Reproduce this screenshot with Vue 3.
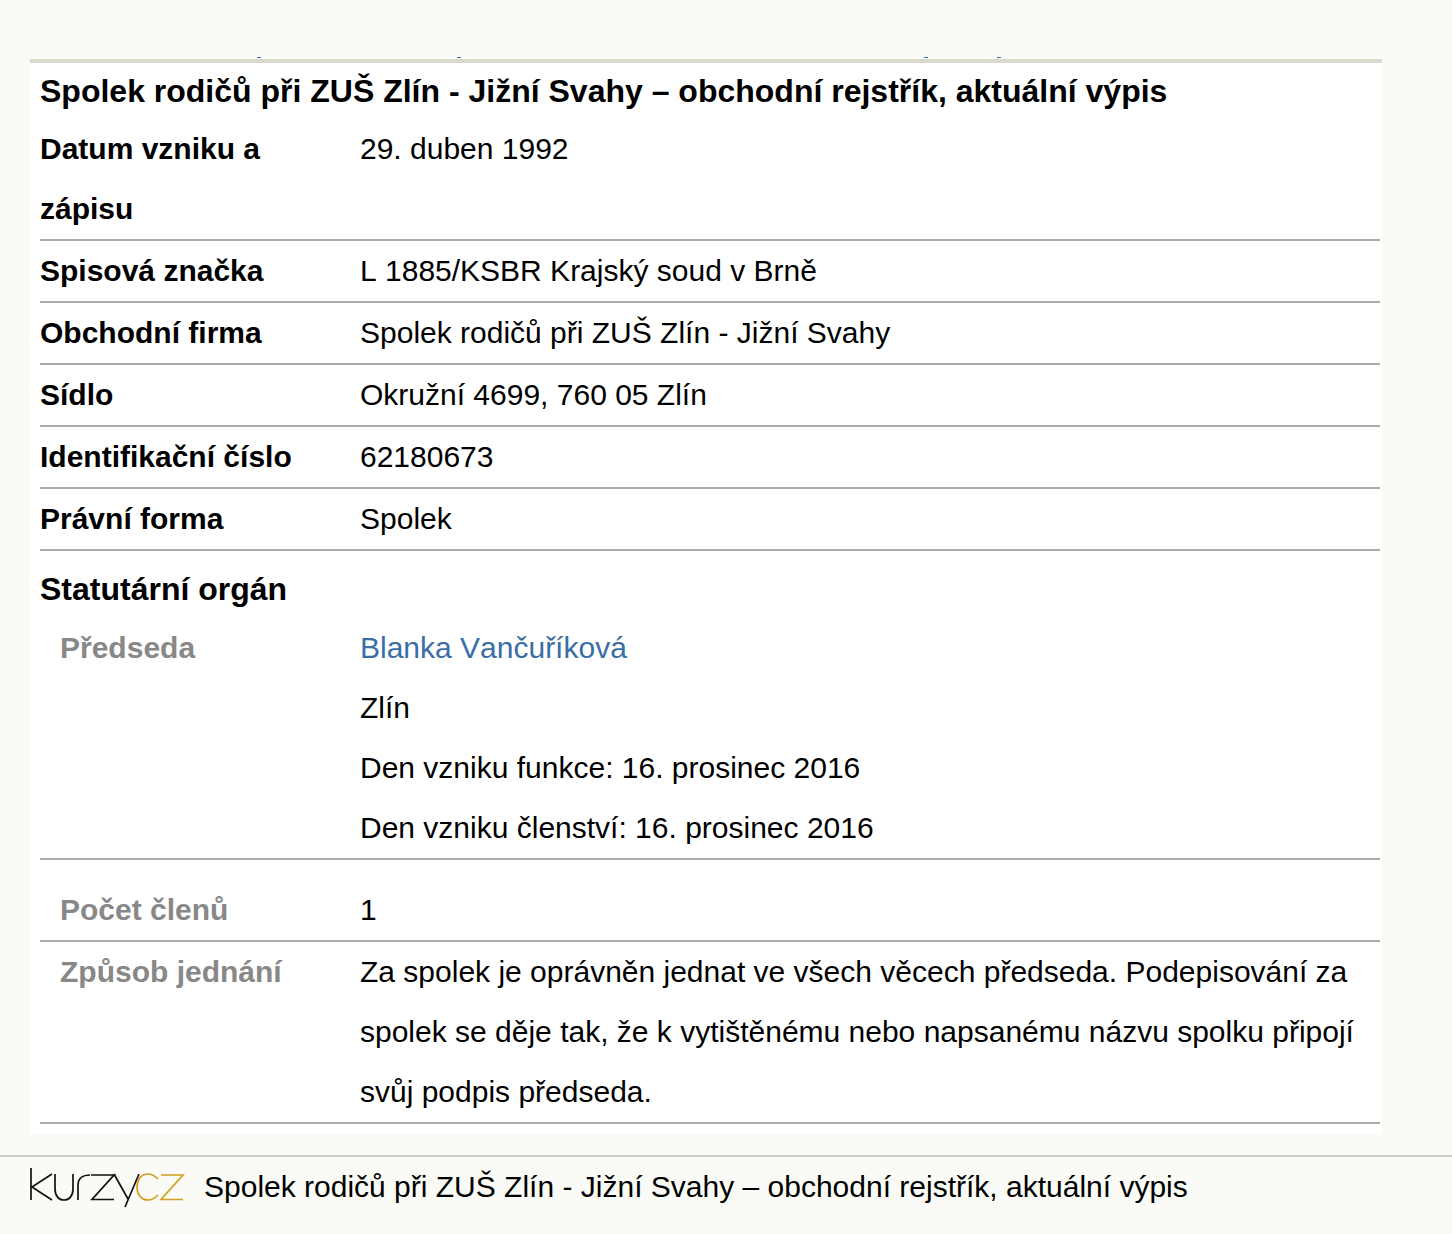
<script setup>
const top = [
  { label: 'Spisová značka', value: 'L 1885/KSBR Krajský soud v Brně' },
  { label: 'Obchodní firma', value: 'Spolek rodičů při ZUŠ Zlín - Jižní Svahy' },
  { label: 'Sídlo', value: 'Okružní 4699, 760 05 Zlín' },
  { label: 'Identifikační číslo', value: '62180673' },
  { label: 'Právní forma', value: 'Spolek' },
]
const specks = [257, 457, 924, 997]
</script>

<template>
  <div class="page">
    <div class="specks">
      <i v-for="s in specks" :key="s" class="speck" :style="{ left: s + 'px' }"></i>
    </div>
    <main class="card">
      <h1 class="title">Spolek rodičů při ZUŠ Zlín - Jižní Svahy – obchodní rejstřík, aktuální výpis</h1>
      <div class="row">
        <div class="label">Datum vzniku a zápisu</div>
        <div class="value">29. duben 1992</div>
      </div>
      <div v-for="r in top" :key="r.label" class="row">
        <div class="label">{{ r.label }}</div>
        <div class="value">{{ r.value }}</div>
      </div>
      <h2 class="section">Statutární orgán</h2>
      <div class="row sub">
        <div class="label">Předseda</div>
        <div class="value">
          <a class="link" href="#">Blanka Vančuříková</a><br />
          Zlín<br />
          Den vzniku funkce: 16. prosinec 2016<br />
          Den vzniku členství: 16. prosinec 2016
        </div>
      </div>
      <div class="row sub count">
        <div class="label">Počet členů</div>
        <div class="value">1</div>
      </div>
      <div class="row sub">
        <div class="label">Způsob jednání</div>
        <div class="value">Za spolek je oprávněn jednat ve všech věcech předseda. Podepisování za spolek se děje tak, že k vytištěnému nebo napsanému názvu spolku připojí svůj podpis předseda.</div>
      </div>
    </main>
    <footer class="footer">
      <svg class="logo" width="154" height="40" viewBox="0 0 154 40" fill="none" stroke-width="1.7">
        <g stroke="#111">
          <path d="M1 1V33M22 7L2 20L22 33" />
          <path d="M25 7V22C25 29 29 33 34 33C39 33 43 29 43 22V7" />
          <path d="M48 33V18C48 11 53 8 60 8" />
          <path d="M61 8H84L62 32.500H84" />
          <path d="M84 7L98 32M109 7L95 40" />
        </g>
        <g stroke="#d2a021">
          <path d="M128 12C125 9 122 7 118 7C111 7 107 13 107 20C107 27 111 33 118 33C122 33 125 31 128 28" />
          <path d="M131 8H153L131 32.500H153" />
        </g>
      </svg>
      <span class="footer-text">Spolek rodičů při ZUŠ Zlín - Jižní Svahy – obchodní rejstřík, aktuální výpis</span>
    </footer>
  </div>
</template>

<style>
html, body { margin: 0; background: #fafbf6; }
</style>

<style scoped>
.page {
  width: 1452px;
  height: 1234px;
  background: #fafbf6;
  color: #000;
  font-family: "Liberation Sans", Arial, sans-serif;
  font-size: 30px;
  line-height: 60px;
  font-kerning: none;
  overflow: hidden;
}
.specks { position: relative; height: 59px; }
.speck { position: absolute; top: 57px; width: 4px; height: 1px; background: #3a6ea5; }
.card {
  width: 1352px;
  margin-left: 30px;
  box-sizing: border-box;
  height: 1075px;
  background: #fff;
  border-top: 4px solid #d9dacd;
  padding: 0 2px 0 10px;
}
.title {
  margin: 0;
  font-size: 32px;
  font-weight: 700;
  line-height: 56px;
}
.row {
  display: grid;
  grid-template-columns: 320px 1fr;
  border-bottom: 2px solid #aaa;
}
.label { font-weight: 700; padding-right: 40px; }
.section {
  margin: 0;
  padding-top: 10px;
  font-size: 32px;
  font-weight: 700;
  line-height: 57px;
}
.sub .label { color: #888; padding-left: 20px; }
.count { margin-top: 20px; }
.link { color: #3a6ea5; text-decoration: none; }
.footer {
  margin-top: 21px;
  border-top: 2px solid #ccc;
  display: flex;
  align-items: center;
  padding-left: 30px;
}
.logo { flex: none; overflow: visible; }
.footer-text { margin-left: 20px; }
</style>
